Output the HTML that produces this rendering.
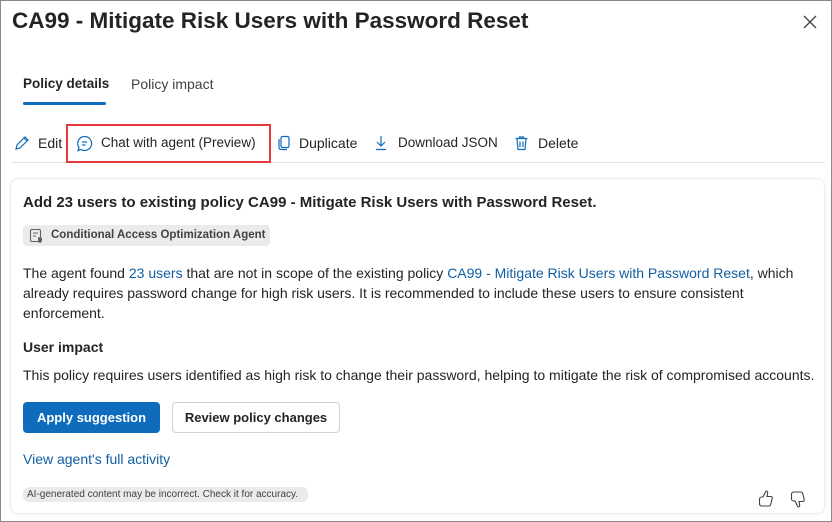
<!DOCTYPE html>
<html><head><meta charset="utf-8"><style>
*{box-sizing:border-box;margin:0;padding:0}
body{width:832px;height:522px;overflow:hidden;background:#fff;font-family:"Liberation Sans",sans-serif;color:#242424;position:relative}
.frame{position:absolute;left:0;top:0;width:832px;height:522px;border:1px solid #8a8a8a}
.a{position:absolute;white-space:nowrap}
.link{color:#115ea3}
</style></head><body>
<div class="frame"></div>
<div class="a" style="left:12px;top:8px;font-size:22.5px;font-weight:bold;color:#242424">CA99 - Mitigate Risk Users with Password Reset</div>
<svg class="a" style="left:803px;top:15px" width="14" height="14" viewBox="0 0 14 14"><path d="M1 1L13 13M13 1L1 13" stroke="#424242" stroke-width="1.3"/></svg>
<div class="a" style="left:23px;top:76px;font-size:13.5px;font-weight:bold">Policy details</div>
<div class="a" style="left:23px;top:102px;width:83px;height:3px;background:#0f6cbd;border-radius:2px"></div>
<div class="a" style="left:131px;top:76px;font-size:14px;color:#424242">Policy impact</div>
<div class="a" style="left:12px;top:162px;width:813px;height:1px;background:#e0e0e0"></div>
<svg class="a" style="left:14px;top:135px" width="16" height="16" viewBox="0 0 16 16"><path d="M2 14l1-4 8-8 3 3-8 8z M10 3l3 3" fill="none" stroke="#0f6cbd" stroke-width="1.2"/></svg>
<div class="a" style="left:38px;top:135px;font-size:14px">Edit</div>
<div class="a" style="left:66px;top:124px;width:205px;height:39px;border:2px solid #e8393c"></div>
<svg class="a" style="left:76px;top:135px" width="17" height="17" viewBox="0 0 17 17"><path d="M8.5 1.5a7 7 0 1 1-3.5 13l-3 1 1-3a7 7 0 0 1 5.5-11z" fill="none" stroke="#0f6cbd" stroke-width="1.2"/><path d="M6 7h5M6 10h3.5" stroke="#0f6cbd" stroke-width="1.2"/></svg>
<div class="a" style="left:101px;top:135px;font-size:13.5px">Chat with agent (Preview)</div>
<svg class="a" style="left:277px;top:135px" width="14" height="16" viewBox="0 0 14 16"><rect x="4" y="1.5" width="8" height="11" rx="1.5" fill="none" stroke="#0f6cbd" stroke-width="1.2"/><path d="M2 4v8.5a2 2 0 0 0 2 2h6" fill="none" stroke="#0f6cbd" stroke-width="1.2"/></svg>
<div class="a" style="left:299px;top:135px;font-size:14px">Duplicate</div>
<svg class="a" style="left:374px;top:135px" width="14" height="16" viewBox="0 0 14 16"><path d="M7 1v10M3 7l4 4 4-4M2 14.5h10" fill="none" stroke="#0f6cbd" stroke-width="1.2"/></svg>
<div class="a" style="left:398px;top:135px;font-size:13.5px">Download JSON</div>
<svg class="a" style="left:514px;top:135px" width="15" height="16" viewBox="0 0 15 16"><path d="M1.5 3.5h12M5.5 3.5V2h4v1.5M3 3.5l1 11h7l1-11M6 6.5v5.5M9 6.5v5.5" fill="none" stroke="#0f6cbd" stroke-width="1.2"/></svg>
<div class="a" style="left:538px;top:135px;font-size:14px">Delete</div>
<div class="a" style="left:10px;top:178px;width:815px;height:336px;border:1px solid #ececec;border-radius:8px;box-shadow:0 1px 3px rgba(0,0,0,.06)"></div>
<div class="a" style="left:23px;top:194px;font-size:15px;font-weight:bold">Add 23 users to existing policy CA99 - Mitigate Risk Users with Password Reset.</div>
<div class="a" style="left:23px;top:225px;width:247px;height:21px;background:#ebebeb;border-radius:4px"></div>
<svg class="a" style="left:29px;top:228px" width="16" height="16" viewBox="0 0 16 16"><rect x="1.5" y="1.5" width="10" height="12" rx="1.5" fill="none" stroke="#616161" stroke-width="1.1"/><path d="M4 5h5M4 8h3" stroke="#616161"/><path d="M9 9l4 1v2.5c0 1.5-2 2.5-2 2.5s-2-1-2-2.5z" fill="#616161"/></svg>
<div class="a" style="left:51px;top:225px;font-size:11.5px;line-height:21px;font-weight:bold;color:#424242">Conditional Access Optimization Agent</div>
<div class="a" style="left:23px;top:263px;font-size:14px;line-height:20px;white-space:normal;width:775px">The agent found <span class="link">23 users</span> that are not in scope of the existing policy <span class="link">CA99 - Mitigate Risk Users with Password Reset</span>, which already requires password change for high risk users. It is recommended to include these users to ensure consistent enforcement.</div>
<div class="a" style="left:23px;top:339px;font-size:14px;font-weight:bold">User impact</div>
<div class="a" style="left:23px;top:367px;font-size:14px">This policy requires users identified as high risk to change their password, helping to mitigate the risk of compromised accounts.</div>
<div class="a" style="left:23px;top:402px;width:137px;height:31px;background:#0f6cbd;border-radius:4px;color:#fff;font-size:13px;font-weight:bold;text-align:center;line-height:31px">Apply suggestion</div>
<div class="a" style="left:172px;top:402px;width:168px;height:31px;border:1px solid #d1d1d1;border-radius:4px;font-size:13px;font-weight:bold;text-align:center;line-height:29px">Review policy changes</div>
<div class="a" style="left:23px;top:451px;font-size:14px;color:#115ea3">View agent's full activity</div>
<div class="a" style="left:23px;top:487px;width:285px;height:15px;background:#ebebeb;border-radius:6px;font-size:10px;color:#424242;line-height:15px;padding-left:4px">AI-generated content may be incorrect. Check it for accuracy.</div>
<svg class="a" style="left:757px;top:489px" width="18" height="20" viewBox="0 0 18 20"><path d="M6 8l3-6c1.5 0 2 1 1.5 3l-.5 2.5h4c1 0 1.5 1 1.2 2l-1.5 6c-.3 1-1 1.5-2 1.5H5c-1.5 0-2.5-1-2.5-2.5V10C2.5 9 3.5 8 5 8z" fill="none" stroke="#424242" stroke-width="1.1"/></svg>
<svg class="a" style="left:789px;top:489px" width="18" height="20" viewBox="0 0 18 20"><path d="M6 12l3 6c1.5 0 2-1 1.5-3l-.5-2.5h4c1 0 1.5-1 1.2-2l-1.5-6C13.4 3.5 12.7 3 11.7 3H5C3.5 3 2.5 4 2.5 5.5V10c0 1 1 2 2.5 2z" fill="none" stroke="#424242" stroke-width="1.1"/></svg>
</body></html>
